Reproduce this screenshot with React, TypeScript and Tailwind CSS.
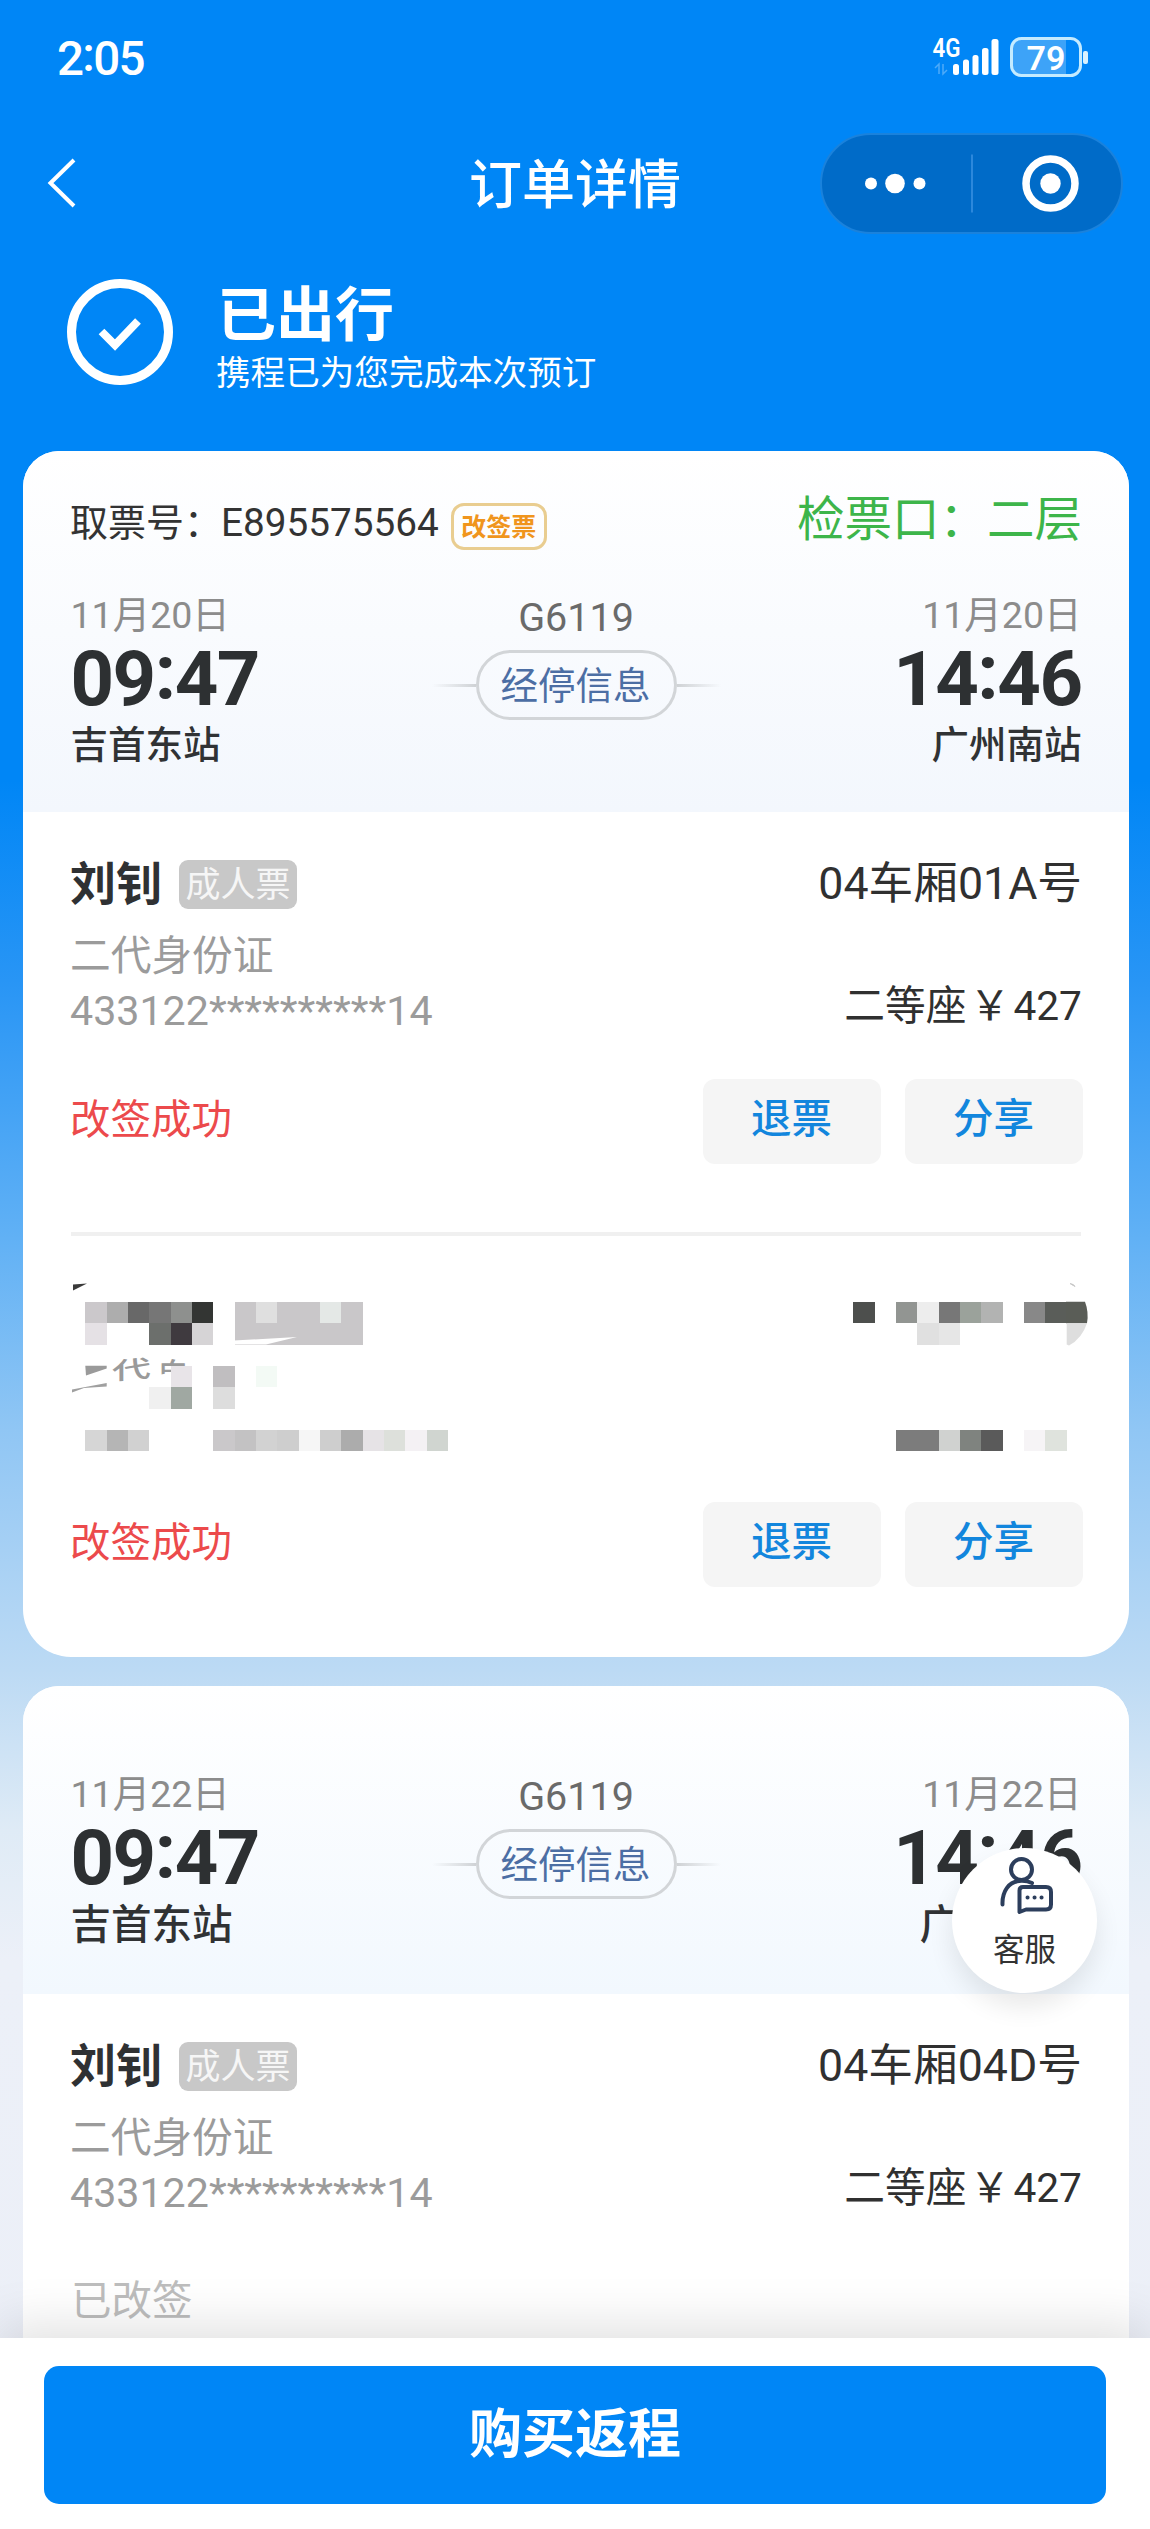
import React from "react";

/** Size of one square of the redaction mosaic. */
const CELL = 64 / 3;

/** [column, row, colour, width in cells] */
const MOSAIC: [number, number, string, number?][] = [
  [4, 61, "#cbc8cb"], [5, 61, "#adadad"], [6, 61, "#686868"], [7, 61, "#767676"], [8, 61, "#8e908e"], [9, 61, "#333533"],
  [11, 61, "#c9c7c9"], [12, 61, "#dfdfdf"], [13, 61, "#c9c7c9", 2], [15, 61, "#e4e8e6"], [16, 61, "#c9c7c9"],
  [4, 62, "#e5e1e5"], [7, 62, "#6c6f6c"], [8, 62, "#3f3a3f"], [9, 62, "#d6d4d6"], [11, 62, "#c9c7c9", 6],
  [8, 64, "#e8e4e8"], [10, 64, "#c0bec0"], [12, 64, "#f3faf5"],
  [7, 65, "#f0f0f0"], [8, 65, "#a0a8a2"], [10, 65, "#dddddd"],
  [4, 67, "#d6d6d6"], [5, 67, "#b5b5b5"], [6, 67, "#d1d1d1"], [10, 67, "#cac8ca"], [11, 67, "#c3c2c3"],
  [12, 67, "#d2d2d2"], [13, 67, "#cecece"], [14, 67, "#f6f6f6"], [15, 67, "#cecece"], [16, 67, "#acacac"],
  [17, 67, "#e6e3e6"], [18, 67, "#dde0db"], [19, 67, "#f4f1f4"], [20, 67, "#d0d5d0"],
  [40, 61, "#4d4f4d"], [42, 61, "#929592"], [43, 61, "#ededed"], [44, 61, "#777777"], [45, 61, "#9ba29b"],
  [46, 61, "#b2b3b2"], [48, 61, "#888888"], [49, 61, "#5a5d59"],
  [43, 62, "#e0e0e0"], [44, 62, "#e6e6e6"],
  [42, 67, "#7c7c7c", 2], [44, 67, "#d0d2d0"], [45, 67, "#7f837f"], [46, 67, "#5a5a5a"], [48, 67, "#f6f4f6"], [49, 67, "#dfe3dd"],
];

/** Latin run inside Chinese text; it keeps the parent's baseline and line box. */
function Latin({ children }: { children: React.ReactNode }) {
  return <span className="font-['Roboto',sans-serif] leading-none">{children}</span>;
}

/** Sets every run of digits, capitals and asterisks in the Latin face. */
function Mixed({ text }: { text: string }) {
  return (
    <>
      {text.split(/([0-9A-Z*]+)/).map((part, i) => (i % 2 ? <Latin key={i}>{part}</Latin> : part))}
    </>
  );
}

function Mosaic() {
  return (
    <svg className="block h-[266px] w-[1106px]" viewBox="23 1235.500 1106 266">
      <g fontFamily="'Noto Sans CJK SC', sans-serif" fontSize="41" fill="#9a9a9a">
        <clipPath id="idline">
          <path d="M155 1350H190V1369L155 1375Z" />
        </clipPath>
        <text transform="translate(112 1379.5) skewY(-5) scale(0.95 0.58)" fontWeight="500">代</text>
        <g clipPath="url(#idline)">
          <text x="153" y="1393">身</text>
        </g>
      </g>
      <g shapeRendering="crispEdges">
        {MOSAIC.map(([c, r, fill, w = 1]) => (
          <rect key={`${c}-${r}`} x={c * CELL} y={r * CELL} width={w * CELL} height={CELL} fill={fill} />
        ))}
      </g>
      <path d="M234 1340L297 1336.5L266 1344H234Z" fill="#fff" />
      <path d="M73 1284L87 1283L79 1287L73 1290Z" fill="#3a3a3a" />
      <path d="M85.3 1365.3H106.7V1368L86 1375Z" fill="#9a9a9a" />
      <path d="M72 1389L106.7 1382.5V1386L84 1387.5L72 1392Z" fill="#a0a0a0" />
      <path d="M1066 1301.3H1085Q1089 1312 1087 1322.7H1066Z" fill="#5a5d57" />
      <path d="M1066.7 1322.7H1087Q1082 1338 1069 1345L1066.7 1344Z" fill="#dedede" />
      <path d="M1070 1283L1075 1286L1073 1284Z" stroke="#ccc" />
    </svg>
  );
}

function StatusBar() {
  return (
    <div className="flex h-[118px] items-start justify-between pl-[57px] pr-[62px] text-white">
      <span className="mt-[36px] font-['Roboto',sans-serif] text-[47.500px] font-medium leading-[46px] tracking-[-1.700px]">
        2<span className="relative -top-[4px]">:</span>05
      </span>
      <svg className="mt-[30px] h-[52px] w-[158px]" viewBox="930 30 158 52" fill="#fff">
        <text x="932.5" y="56.500" fontSize="25" fontWeight="600" textLength="28" lengthAdjust="spacingAndGlyphs" fontFamily="Roboto, sans-serif">4G</text>
        <path d="M935 68l4-4v10M947 70l-4 4V64" stroke="#fff" strokeWidth="1.5" fill="none" opacity="0.3" />
        <rect x="953" y="64" width="6" height="11" rx="2.5" />
        <rect x="963" y="59.500" width="6" height="15.500" rx="2.500" />
        <rect x="972.500" y="55" width="6" height="20" rx="2.500" />
        <rect x="982" y="48" width="6.500" height="27" rx="2.500" />
        <rect x="991.500" y="39" width="7" height="36" rx="2.500" />
        <path d="M1021 40H1066V75H1021Q1013 75 1013 67V48Q1013 40 1021 40Z" opacity="0.24" />
        <rect x="1011.500" y="38.500" width="69" height="37" rx="10" fill="none" stroke="#c4ebff" strokeWidth="3" />
        <rect x="1083" y="51" width="5" height="13" rx="2" fill="#d8f2ff" />
        <text x="1026.500" y="69.500" fontSize="34" fontWeight="600" fontFamily="Roboto, sans-serif">79</text>
      </svg>
    </div>
  );
}

function TitleBar() {
  return (
    <div className="relative flex h-[130px] items-center text-white">
      <svg className="ml-[46px] h-[56px] w-[32px]" viewBox="46 155 32 56" fill="none" stroke="#fff" strokeWidth="4">
        <path d="M74 160L50.500 183L74 206" />
      </svg>
      <h1 className="absolute inset-x-0 top-0 text-center text-[53px] font-medium leading-[127px]">订单详情</h1>
      <div className="absolute right-[27px] flex h-[101px] w-[303px] items-center rounded-full border-2 border-[#1a82dc] bg-[#006bc8]">
        <svg className="h-full w-full" viewBox="822 134.500 299 97" fill="#fff">
          <circle cx="871" cy="183" r="6" />
          <circle cx="895" cy="183" r="9.800" />
          <circle cx="919.500" cy="183" r="6" />
          <rect x="971" y="154" width="2" height="58" fill="#2c88dc" />
          <circle cx="1050.500" cy="183" r="24.500" fill="none" stroke="#fff" strokeWidth="7.500" />
          <circle cx="1050.500" cy="183" r="10.200" />
        </svg>
      </div>
    </div>
  );
}

function OrderState() {
  return (
    <div className="flex h-[203px] pl-[66px] pt-[29px] text-white">
      <svg className="h-[110px] w-[110px]" viewBox="66 277 110 110" fill="none" stroke="#fff">
        <circle cx="120" cy="332" r="48.500" strokeWidth="9" />
        <path d="M101.500 331.500L115 345L138 321" strokeWidth="8" />
      </svg>
      <div className="ml-[41px] pt-px">
        <p className="text-[59px] font-bold leading-[66px]">已出行</p>
        <p className="-ml-px mt-[7px] text-[34.600px] leading-[38px]">携程已为您完成本次预订</p>
      </div>
    </div>
  );
}

function Time({ hours, minutes }: { hours: string; minutes: string }) {
  return (
    <p className="h-[78px] font-['Roboto',sans-serif] text-[76px] font-bold leading-[89px] tracking-[-1.500px] text-[#2d3032]">
      {hours}
      <span className="relative -top-[7px]">:</span>
      {minutes}
    </p>
  );
}

interface TripProps {
  date: string;
  large?: boolean;
}

function Trip({ date, large }: TripProps) {
  const station = large
    ? "h-[60px] text-[40.500px] font-medium leading-[60px] text-[#303234]"
    : "h-[60px] text-[37.500px] font-medium leading-[58px] text-[#303234]";
  return (
    <div className={large ? "grid h-[224px] grid-cols-3 px-[47.500px]" : "grid h-[221px] grid-cols-3 px-[47.500px]"}>
      <div className="whitespace-nowrap">
        <p className="h-[44px] text-[37.500px] leading-[42px] text-[#8c8c8c]"><Mixed text={date} /></p>
        <Time hours="09" minutes="47" />
        <p className={station}>吉首东站</p>
      </div>
      <div className="flex flex-col items-center">
        <p className="h-[59px] font-['Roboto',sans-serif] text-[39.500px] leading-[53px] text-[#6a6a6a]">G6119</p>
        <div className="flex items-center">
          <i className="h-[3px] w-[44px] bg-linear-to-r from-transparent to-[#cfd2d5]" />
          <span className="flex h-[70px] w-[201px] items-center justify-center rounded-full border-[3px] border-[#d2d5d8] pb-[4px] pr-px text-[37.500px] leading-none text-[#4c6ea4]">
            经停信息
          </span>
          <i className="h-[3px] w-[44px] bg-linear-to-l from-transparent to-[#cfd2d5]" />
        </div>
      </div>
      <div className="whitespace-nowrap text-right">
        <p className="h-[44px] text-[37.500px] leading-[42px] text-[#8c8c8c]"><Mixed text={date} /></p>
        <Time hours="14" minutes="46" />
        <p className={station}>广州南站</p>
      </div>
    </div>
  );
}

function Passenger({ seat }: { seat: string }) {
  return (
    <div className="flex h-[267px] justify-between pl-[47px] pr-[47px] pt-[38px]">
      <div>
        <div className="flex h-[60px] items-center">
          <span className="text-[46px] font-bold leading-[58px] text-[#2f3133]">刘钊</span>
          <span className="ml-[17px] mt-[8px] flex h-[49px] w-[118px] items-center justify-center rounded-[9px] bg-[#c8c8c8] pb-[5px] text-[35px] leading-none text-[#f6f6f6]">
            成人票
          </span>
        </div>
        <p className="mt-[18px] text-[40.700px] leading-[50px] text-[#9b9b9b]">二代身份证</p>
        <p className="mt-[1px] text-[41.200px] leading-[56px] text-[#9b9b9b]"><Mixed text="433122**********14" /></p>
      </div>
      <div className="text-right text-[#303030]">
        <p className="text-[44.700px] leading-[59px]"><Mixed text={seat} /></p>
        <p className="mt-[65px] text-[40.700px] leading-[58px]">
          二等座<span className="inline-block w-[47px] text-center leading-none">￥</span><Latin>427</Latin>
        </p>
      </div>
    </div>
  );
}

function ActionButton({ label }: { label: string }) {
  return (
    <button className="flex h-[85px] w-[178px] items-center justify-center rounded-[12px] bg-[#f5f5f5] pb-[10px] pr-px text-[40.500px] font-medium leading-none text-[#1286dd]">
      {label}
    </button>
  );
}

function Actions() {
  return (
    <div className="flex h-[85px] items-center pl-[47px] pr-[46px]">
      <p className="pb-[10px] text-[40.500px] leading-[50px] text-[#ec4a4c]">改签成功</p>
      <div className="ml-auto flex gap-[24px]">
        <ActionButton label="退票" />
        <ActionButton label="分享" />
      </div>
    </div>
  );
}

function ServiceButton() {
  return (
    <button className="absolute left-[952px] top-[1848px] flex h-[145px] w-[145px] flex-col items-center rounded-full bg-white pt-[6px] shadow-[0_14px_26px_rgba(0,0,0,0.09)]">
      <svg className="h-[62px] w-[62px]" viewBox="994 1854 62 62" fill="none" stroke="#2c3e5c" strokeWidth="4" strokeLinecap="round" strokeLinejoin="round">
        <circle cx="1021.500" cy="1869.500" r="10.500" />
        <path d="M1002.500 1904.500C1002 1891 1009 1882 1019 1881C1025 1880.500 1029 1881.500 1032 1883" />
        <path d="M1023 1887H1046Q1051 1887 1051 1892V1904.500Q1051 1909.500 1046 1909.500H1026L1019.500 1912V1890.500Q1019.500 1887 1023 1887Z" />
        <path d="M1027.500 1897.500h.1M1034.500 1897.500h.1M1041.500 1897.500h.1" />
      </svg>
      <span className="mt-[14px] text-[31.500px] leading-[34px] text-[#333]">客服</span>
    </button>
  );
}

export default function App() {
  return (
    <div
      lang="zh-CN"
      className="relative flex h-[2529px] w-[1150px] flex-col overflow-hidden bg-[linear-gradient(180deg,#0086f6_0px,#0086f6_780px,#2895f5_980px,#5fb0f5_1230px,#90c6f4_1430px,#bcdaf4_1670px,#dfebf6_1830px,#ecf0f8_1960px,#eceff7_2529px)] font-['Noto_Sans_CJK_SC',sans-serif]"
    >
      <StatusBar />
      <TitleBar />
      <OrderState />

      <section className="ml-[23px] mr-[21px] h-[1206px] shrink-0 overflow-hidden rounded-t-[36px] rounded-b-[48px] bg-white">
        <div className="bg-linear-to-b from-white to-[#f3f7fd]">
          <div className="flex h-[140px] items-start justify-between pl-[47px] pr-[47px] pt-[39px]">
            <div className="flex items-center">
              <span className="text-[38px] leading-[60px] text-[#333]">
                取票号：
                <span className="-ml-px font-['Roboto',sans-serif] text-[38.700px] leading-none">E895575564</span>
              </span>
              <span className="ml-[12px] mt-[13px] flex h-[47px] w-[96px] items-center justify-center rounded-[13px] border-[3px] border-[#e9cd90] pb-[3px] text-[25px] font-bold leading-none text-[#f0951d]">
                改签票
              </span>
            </div>
            <span className="text-[47.500px] leading-[52px] text-[#3db54a]">检票口：二层</span>
          </div>
          <Trip date="11月20日" />
        </div>
        <Passenger seat="04车厢01A号" />
        <Actions />
        <hr className="mx-[48px] mt-[68px] h-[4px] border-0 bg-[#f0f0f0]" />
        <Mosaic />
        <Actions />
      </section>

      <section className="ml-[23px] mr-[21px] mt-[29px] h-[700px] shrink-0 overflow-hidden rounded-t-[36px] bg-white">
        <div className="bg-linear-to-b from-white to-[#f2f8fe] pt-[84px]">
          <Trip date="11月22日" large />
        </div>
        <Passenger seat="04车厢04D号" />
        <p className="pl-[48px] pt-[12px] text-[40.500px] leading-[50px] text-[#bdbdbd]">已改签</p>
      </section>

      <ServiceButton />

      <footer className="absolute inset-x-0 bottom-0 h-[191px] bg-white px-[44px] pt-[28px] shadow-[0_-10px_50px_rgba(0,0,0,0.13)]">
        <button className="block h-[138px] w-full rounded-[15px] bg-[#0086f6] pb-[8px] text-center text-[53px] font-bold text-white">
          购买返程
        </button>
      </footer>
    </div>
  );
}
